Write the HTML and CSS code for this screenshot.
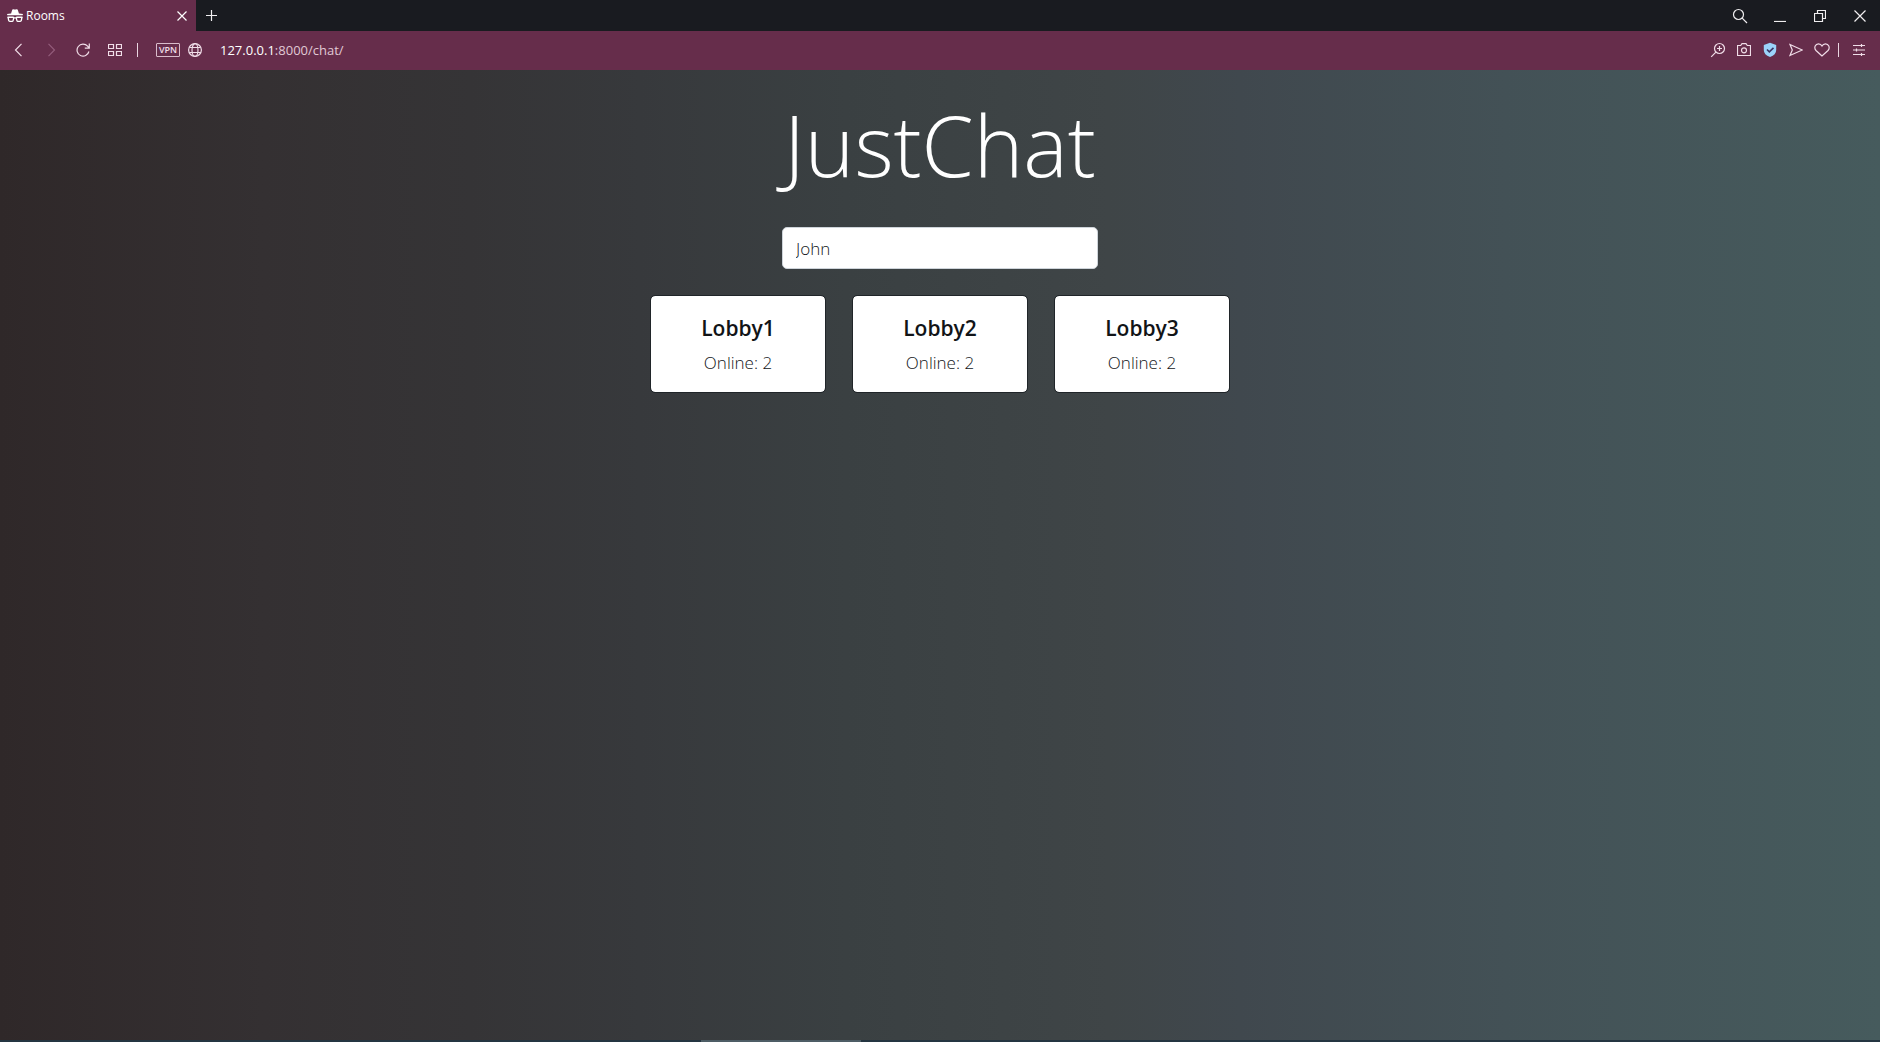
FILE: index.html
```html
<!DOCTYPE html>
<html lang="en">
<head>
<meta charset="utf-8">
<title>Rooms</title>
<link rel="stylesheet" href="styles.css">
</head>
<body>
<header class="tabbar">
  <div class="tab">
    <svg class="tab-icon" width="16" height="14" viewBox="0 0 16 14" fill="#fff"><path d="M4.2 3.9 5.2.9Q5.5 0 6.4.3 8 .9 9.6.3q.9-.3 1.2.6l1 3v1.2H4.200z"/><path d="M0 5Q8 3.700 16 5L15.600 6.200H.4z"/><path fill-rule="evenodd" d="M.8 7.500H6.400L7.200 8.300H8.800L9.600 7.500H15.200L16 8.300 15.500 8.800 15 11.600Q14.600 13 13.200 13H11Q9.500 13 9.200 11.500L8.800 9.600H7.200L6.800 11.500Q6.500 13 5 13H2.800Q1.400 13 1 11.600L.5 8.800 0 8.300zM1.900 8.900 2.400 11.400 3 11.800H5L5.500 11.400 6 8.900zM10 8.900 10.500 11.400 11 11.800H13L13.600 11.400 14.100 8.900z"/></svg>
    <span class="tab-title">Rooms</span>
    <button class="tab-close" aria-label="Close tab"><svg width="10" height="10" viewBox="0 0 10 10"><path d="M.5.5l9 9M9.500.5l-9 9"/></svg></button>
  </div>
  <button class="new-tab" aria-label="New tab"><svg width="11" height="11" viewBox="0 0 11 11"><path d="M5.500 0v11M0 5.500h11"/></svg></button>
  <div class="window-controls">
    <button aria-label="Search tabs"><svg width="16" height="16" viewBox="0 0 16 16"><circle cx="6.500" cy="6.500" r="5"/><path d="M10.200 10.200l4.800 4.800"/></svg></button>
    <button aria-label="Minimize"><svg width="12" height="12" viewBox="0 0 12 12"><path d="M0 11.500h12"/></svg></button>
    <button aria-label="Restore"><svg width="12" height="12" viewBox="0 0 12 12"><path d="M3.500 3.500v-3h8v8h-3M.5 3.500h8v8h-8z"/></svg></button>
    <button aria-label="Close window"><svg width="12" height="12" viewBox="0 0 12 12"><path d="M.5.5l11 11M11.500.5l-11 11"/></svg></button>
  </div>
</header>

<nav class="toolbar" aria-label="Browser">
  <div class="nav-buttons">
    <button aria-label="Back"><svg width="14" height="14" viewBox="0 0 14 14"><path d="M9.500.8L3.500 7l6 6.200"/></svg></button>
    <button aria-label="Forward" disabled><svg width="14" height="14" viewBox="0 0 14 14"><path d="M4.500.8l6 6.200-6 6.200"/></svg></button>
    <button aria-label="Reload"><svg width="14" height="14" viewBox="0 0 14 14"><path d="M12.900 8.500A6 6 0 1 1 11.600 3.200L13 4.900M13.300.5v4.700H8.800"/></svg></button>
    <button aria-label="Speed dial"><svg width="14" height="12" viewBox="0 0 14 12"><path d="M.5.5h5v4h-5zM8.500.5h5v4h-5zM.5 7.500h5v4h-5zM8.500 7.500h5v4h-5z"/></svg></button>
  </div>
  <span class="divider"></span>
  <button class="vpn">VPN</button>
  <svg class="globe" width="14" height="14" viewBox="0 0 14 14"><circle cx="7" cy="7" r="6.400"/><ellipse cx="7" cy="7" rx="3" ry="6.400"/><path d="M1.400 4.500h11.200M1.400 9.500h11.200"/></svg>
  <a class="address" href="#"><strong>127.0.0.1</strong>:8000/chat/</a>
  <div class="page-actions">
    <button aria-label="Zoom"><svg width="16" height="16" viewBox="0 0 16 16"><circle cx="9.500" cy="6.500" r="5"/><path d="M5.900 10.100L1.200 14.800M7 6.500h5M9.500 4v5"/></svg></button>
    <button aria-label="Snapshot"><svg width="14" height="14" viewBox="0 0 14 14"><path d="M.5 2.500h3.200L5 .7h4l1.300 1.800h3.200v10H.5z"/><circle cx="7" cy="7.300" r="2.500"/></svg></button>
    <button aria-label="Ad blocker"><svg width="14" height="16" viewBox="0 0 14 16"><path d="M7 .8L13.200 3v5q0 5-6.200 7Q.8 13 .8 8V3z" fill="#9bd3fa" stroke="none"/><path d="M4 7.500l2.300 2.300L10.500 5.800" stroke="#3b3566" stroke-width="1.600"/></svg></button>
    <button aria-label="Send"><svg width="14" height="14" viewBox="0 0 14 14"><path d="M1 1.500L13.300 7 1 12.500 3.300 7z"/></svg></button>
    <button aria-label="Bookmark"><svg width="16" height="14" viewBox="0 0 16 14"><path d="M8 13L2 7.500C-.5 4.500 1.500.8 4.500.8 6.500.8 7.500 2 8 3 8.500 2 9.500.8 11.500.8c3 0 5 3.700 2.500 6.700z"/></svg></button>
    <span class="divider"></span>
    <button class="setup" aria-label="Easy setup"><svg width="12" height="12" viewBox="0 0 12 12"><path d="M0 1.500h12M0 6h12M0 10.500h12M8.500 0v3M3.500 4.500v3M8.500 9v3"/></svg></button>
  </div>
</nav>

<main class="page">
  <h1 class="title">JustChat</h1>
  <input class="name" type="text" value="John" aria-label="Your name">
  <div class="rooms">
    <a class="room" href="#"><h2>Lobby1</h2><p>Online: 2</p></a>
    <a class="room" href="#"><h2>Lobby2</h2><p>Online: 2</p></a>
    <a class="room" href="#"><h2>Lobby3</h2><p>Online: 2</p></a>
  </div>
</main>
<footer class="taskbar-edge"><span></span></footer>
</body>
</html>
```
FILE: styles.css
```css
* { box-sizing: border-box; }

body {
  margin: 0;
  min-height: 100vh;
  display: flex;
  flex-direction: column;
  font-family: "Open Sans", "Noto Sans", sans-serif;
}

button {
  display: flex;
  align-items: center;
  justify-content: center;
  padding: 0;
  border: 0;
  background: none;
  color: inherit;
  font: inherit;
}

svg {
  flex: none;
  fill: none;
  stroke: currentColor;
  stroke-width: 1.2;
}

.tabbar {
  display: flex;
  height: 31px;
  background: #191b20;
  color: #f0eef0;
}

.tab {
  display: flex;
  align-items: center;
  width: 196px;
  padding: 0 8px 0 7px;
  background: #662d4b;
  color: #fff;
  font-size: 12px;
}

.tab-icon { fill: #fff; stroke: none; }
.tab-title { flex: 1; margin-left: 3px; }
.tab-close { width: 12px; height: 31px; }
.new-tab { width: 31px; }

.window-controls { display: flex; margin-left: auto; }
.window-controls button { width: 40px; }

.toolbar {
  display: flex;
  align-items: center;
  height: 39px;
  padding: 0 8px 2px 3px;
  background: #662d4b;
  color: #f0dde8;
}

.nav-buttons, .page-actions {
  display: flex;
  align-items: center;
}

.nav-buttons button { width: 32px; height: 36px; }
.nav-buttons button:disabled { color: #935c7b; }
.page-actions { margin-left: auto; }
.page-actions button { width: 26px; height: 36px; }
.page-actions .divider { margin: 0 7px 0 3px; }

.divider {
  width: 1px;
  height: 14px;
  margin: 0 18px 0 6px;
  background: #ead5e1;
}

.vpn {
  width: 24px;
  height: 14px;
  border: 1px solid #d9bccb;
  border-radius: 1px;
  font-size: 9px;
  font-weight: 600;
  line-height: 12px;
}

.globe { margin: 0 18px 0 8px; }

.address {
  color: #e0c9d5;
  font-size: 13px;
  text-decoration: none;
}

.address strong { color: #fff; font-weight: 400; }

.page {
  flex: 1;
  display: flex;
  flex-direction: column;
  align-items: center;
  padding-top: 22px;
  background: linear-gradient(90deg, #2f2829 0%, #343032 14%, #353436 25%, #37393c 34%, #3a4042 45%, #3f4547 59%, #40484e 66%, #435156 80%, #465b5d 100%);
}

.title {
  margin: 0;
  color: #fff;
  font-size: 84px;
  font-weight: 300;
  line-height: 106px;
}

.name {
  width: 316px;
  height: 42px;
  margin: 29px 0 26px;
  padding: 0 13px;
  border: 1px solid #ced4da;
  border-radius: 5px;
  background: #fff;
  color: #111417;
  font-family: inherit;
  font-size: 17px;
  font-weight: 300;
}

.rooms { display: flex; gap: 26px; }

.room {
  width: 176px;
  padding: 19px 16px 16px;
  border: 1px solid #202529;
  border-radius: 5px;
  background: #fff;
  background-clip: padding-box;
  color: #111417;
  text-align: center;
  text-decoration: none;
}

.room h2 {
  margin: 0 0 8px;
  font-size: 21px;
  font-weight: 600;
  line-height: 27px;
}

.room p {
  margin: 0;
  font-size: 17px;
  font-weight: 300;
  line-height: 26px;
}

.taskbar-edge {
  display: flex;
  height: 2px;
  padding-left: 701px;
  background: #243541;
}

.taskbar-edge span { width: 160px; background: #4d5d65; }
```
